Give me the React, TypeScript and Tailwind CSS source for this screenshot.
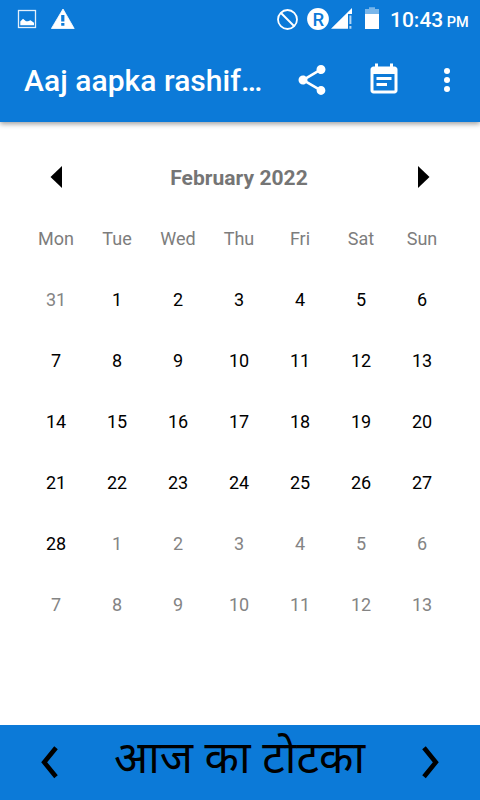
const weekdays = ['Mon', 'Tue', 'Wed', 'Thu', 'Fri', 'Sat', 'Sun'];

const days = [
  { label: 31, muted: true },
  ...Array.from({ length: 28 }, (_, i) => ({ label: i + 1, muted: false })),
  ...Array.from({ length: 13 }, (_, i) => ({ label: i + 1, muted: true })),
];

function StatusBar() {
  return (
    <div className="flex h-[38px] items-center">
      <svg className="ml-[17px] shrink-0" width="20" height="38" viewBox="0 0 20 38" fill="none">
        <rect x="1.5" y="10.5" width="17" height="17" stroke="#e4f0fb" strokeWidth="1.3" />
        <path d="M3.3 25.3v-3.8l2.7-2.7 3 2.5h2l2.5-1 3.5 2.5v2.5z" fill="#fff" />
      </svg>
      <svg className="ml-[14px] shrink-0" width="24" height="38" viewBox="0 0 24 38">
        <path d="M12 9 23.2 28.5H.4z" fill="#fff" stroke="#fff" strokeWidth=".8" strokeLinejoin="round" />
        <path d="M10.2 15h3.2v6.5h-3.2zM10.2 23h3.2v2.8h-3.2z" fill="#0c7ad8" />
      </svg>
      <div className="flex-1" />
      <svg className="shrink-0" width="104" height="38" viewBox="276 0 104 38">
        <circle cx="287.5" cy="19.5" r="9.5" fill="none" stroke="#fff" strokeWidth="1.8" />
        <path d="m281 13 13 13" stroke="#fff" strokeWidth="2" />
        <circle cx="318" cy="19" r="10.9" fill="#fff" />
        <text x="318.4" y="25.5" textAnchor="middle" fontFamily="Roboto, sans-serif" fontSize="18.5" fontWeight="500" fill="#0c7ad8">R</text>
        <path d="M331 28.7 352 8v6h-4v14.7z" fill="#fff" />
        <path d="M349.4 15.5h2v8.5h-2zM349.4 26h2v2.7h-2z" fill="#b5d6f4" />
        <path d="M365 9h4V7.3h6V9h4v5h-14z" fill="#79b6ea" />
        <path d="M365 14h14v15h-14z" fill="#fff" />
      </svg>
      <div className="ml-[10px] flex w-[90px] items-baseline gap-[3.5px] whitespace-nowrap pt-[2px] font-medium leading-none text-white">
        <span className="text-[21px]">10:43</span>
        <span className="text-[14.5px]">PM</span>
      </div>
    </div>
  );
}

function Chevron({ next = false }: { next?: boolean }) {
  return (
    <svg className="mb-px" width="20" height="34" viewBox="0 0 20 34" fill="none">
      <path d={next ? 'M4 2.8 15.8 17.3 4 31.8' : 'M16 2.8 4.2 17.3 16 31.8'} stroke="#000" strokeWidth="4.6" />
    </svg>
  );
}

export default function App() {
  return (
    <div className="flex h-[800px] w-[480px] flex-col overflow-hidden bg-white font-[Roboto,sans-serif]">
      <header className="h-[122px] shrink-0 bg-[#0c7ad8] shadow-[0_2px_5px_rgba(0,0,0,0.38)]">
        <StatusBar />
        <div className="flex h-[84px] items-center pl-6 text-white">
          <h1 className="w-[270px] whitespace-nowrap pt-[2px] text-[30px] font-medium leading-9 tracking-[0.05px]">Aaj aapka rashif…</h1>
          <svg width="36" height="36" viewBox="0 0 24 24" fill="currentColor">
            <path d="M18 16.08c-.76 0-1.44.3-1.96.77L8.91 12.7c.05-.23.09-.46.09-.7s-.04-.47-.09-.7l7.05-4.11c.54.5 1.25.81 2.04.81 1.66 0 3-1.34 3-3s-1.34-3-3-3-3 1.34-3 3c0 .24.04.47.09.7L8.04 9.81C7.5 9.31 6.79 9 6 9c-1.66 0-3 1.34-3 3s1.34 3 3 3c.79 0 1.5-.31 2.04-.81l7.12 4.16c-.05.21-.08.43-.08.65 0 1.61 1.31 2.92 2.92 2.92s2.92-1.31 2.92-2.92-1.31-2.92-2.92-2.92z" />
          </svg>
          <svg className="ml-9" width="36" height="36" viewBox="0 0 24 24" fill="currentColor">
            <path d="M17 10H7v2h10v-2zm2-7h-1V1h-2v2H8V1H6v2H5c-1.11 0-1.99.9-1.99 2L3 19c0 1.1.89 2 2 2h14c1.1 0 2-.9 2-2V5c0-1.1-.9-2-2-2zm0 16H5V8h14v11zm-5-5H7v2h7v-2z" />
          </svg>
          <svg className="ml-[27px]" width="36" height="36" viewBox="0 0 24 24" fill="currentColor">
            <circle cx="12" cy="6" r="2" />
            <circle cx="12" cy="12" r="2" />
            <circle cx="12" cy="18" r="2" />
          </svg>
        </div>
      </header>

      <main className="flex-1 px-[26px] pt-[25px]">
        <div className="flex h-[61px] items-center justify-between px-6">
          <svg className="mb-px" width="12" height="22" viewBox="0 0 12 22"><path d="M12 0v22L.5 11z" /></svg>
          <h2 className="pr-[2px] text-[21px] font-bold leading-6 tracking-[0.05px] text-[#757575]">February 2022</h2>
          <svg className="mb-px" width="12" height="22" viewBox="0 0 12 22"><path d="M0 0v22L11.5 11z" /></svg>
        </div>
        <div className="-ml-[0.5px] grid grid-cols-[repeat(7,61px)] text-center text-[18px] leading-[61px]">
          {weekdays.map((day) => (
            <div key={day} className="h-[61px] text-[#7d7d7d]">{day}</div>
          ))}
          {days.map((day, i) => (
            <div key={i} className={day.muted ? 'h-[61px] text-[#848484]' : 'h-[61px] text-black'}>
              {day.label}
            </div>
          ))}
        </div>
      </main>

      <footer className="flex h-[75px] shrink-0 items-center justify-between bg-[#0c7ad8] px-10">
        <Chevron />
        <span className="whitespace-nowrap pb-[14px] pr-px font-['Noto_Sans',sans-serif] text-[44.8px] leading-[60px]">आज का टोटका</span>
        <Chevron next />
      </footer>
    </div>
  );
}
